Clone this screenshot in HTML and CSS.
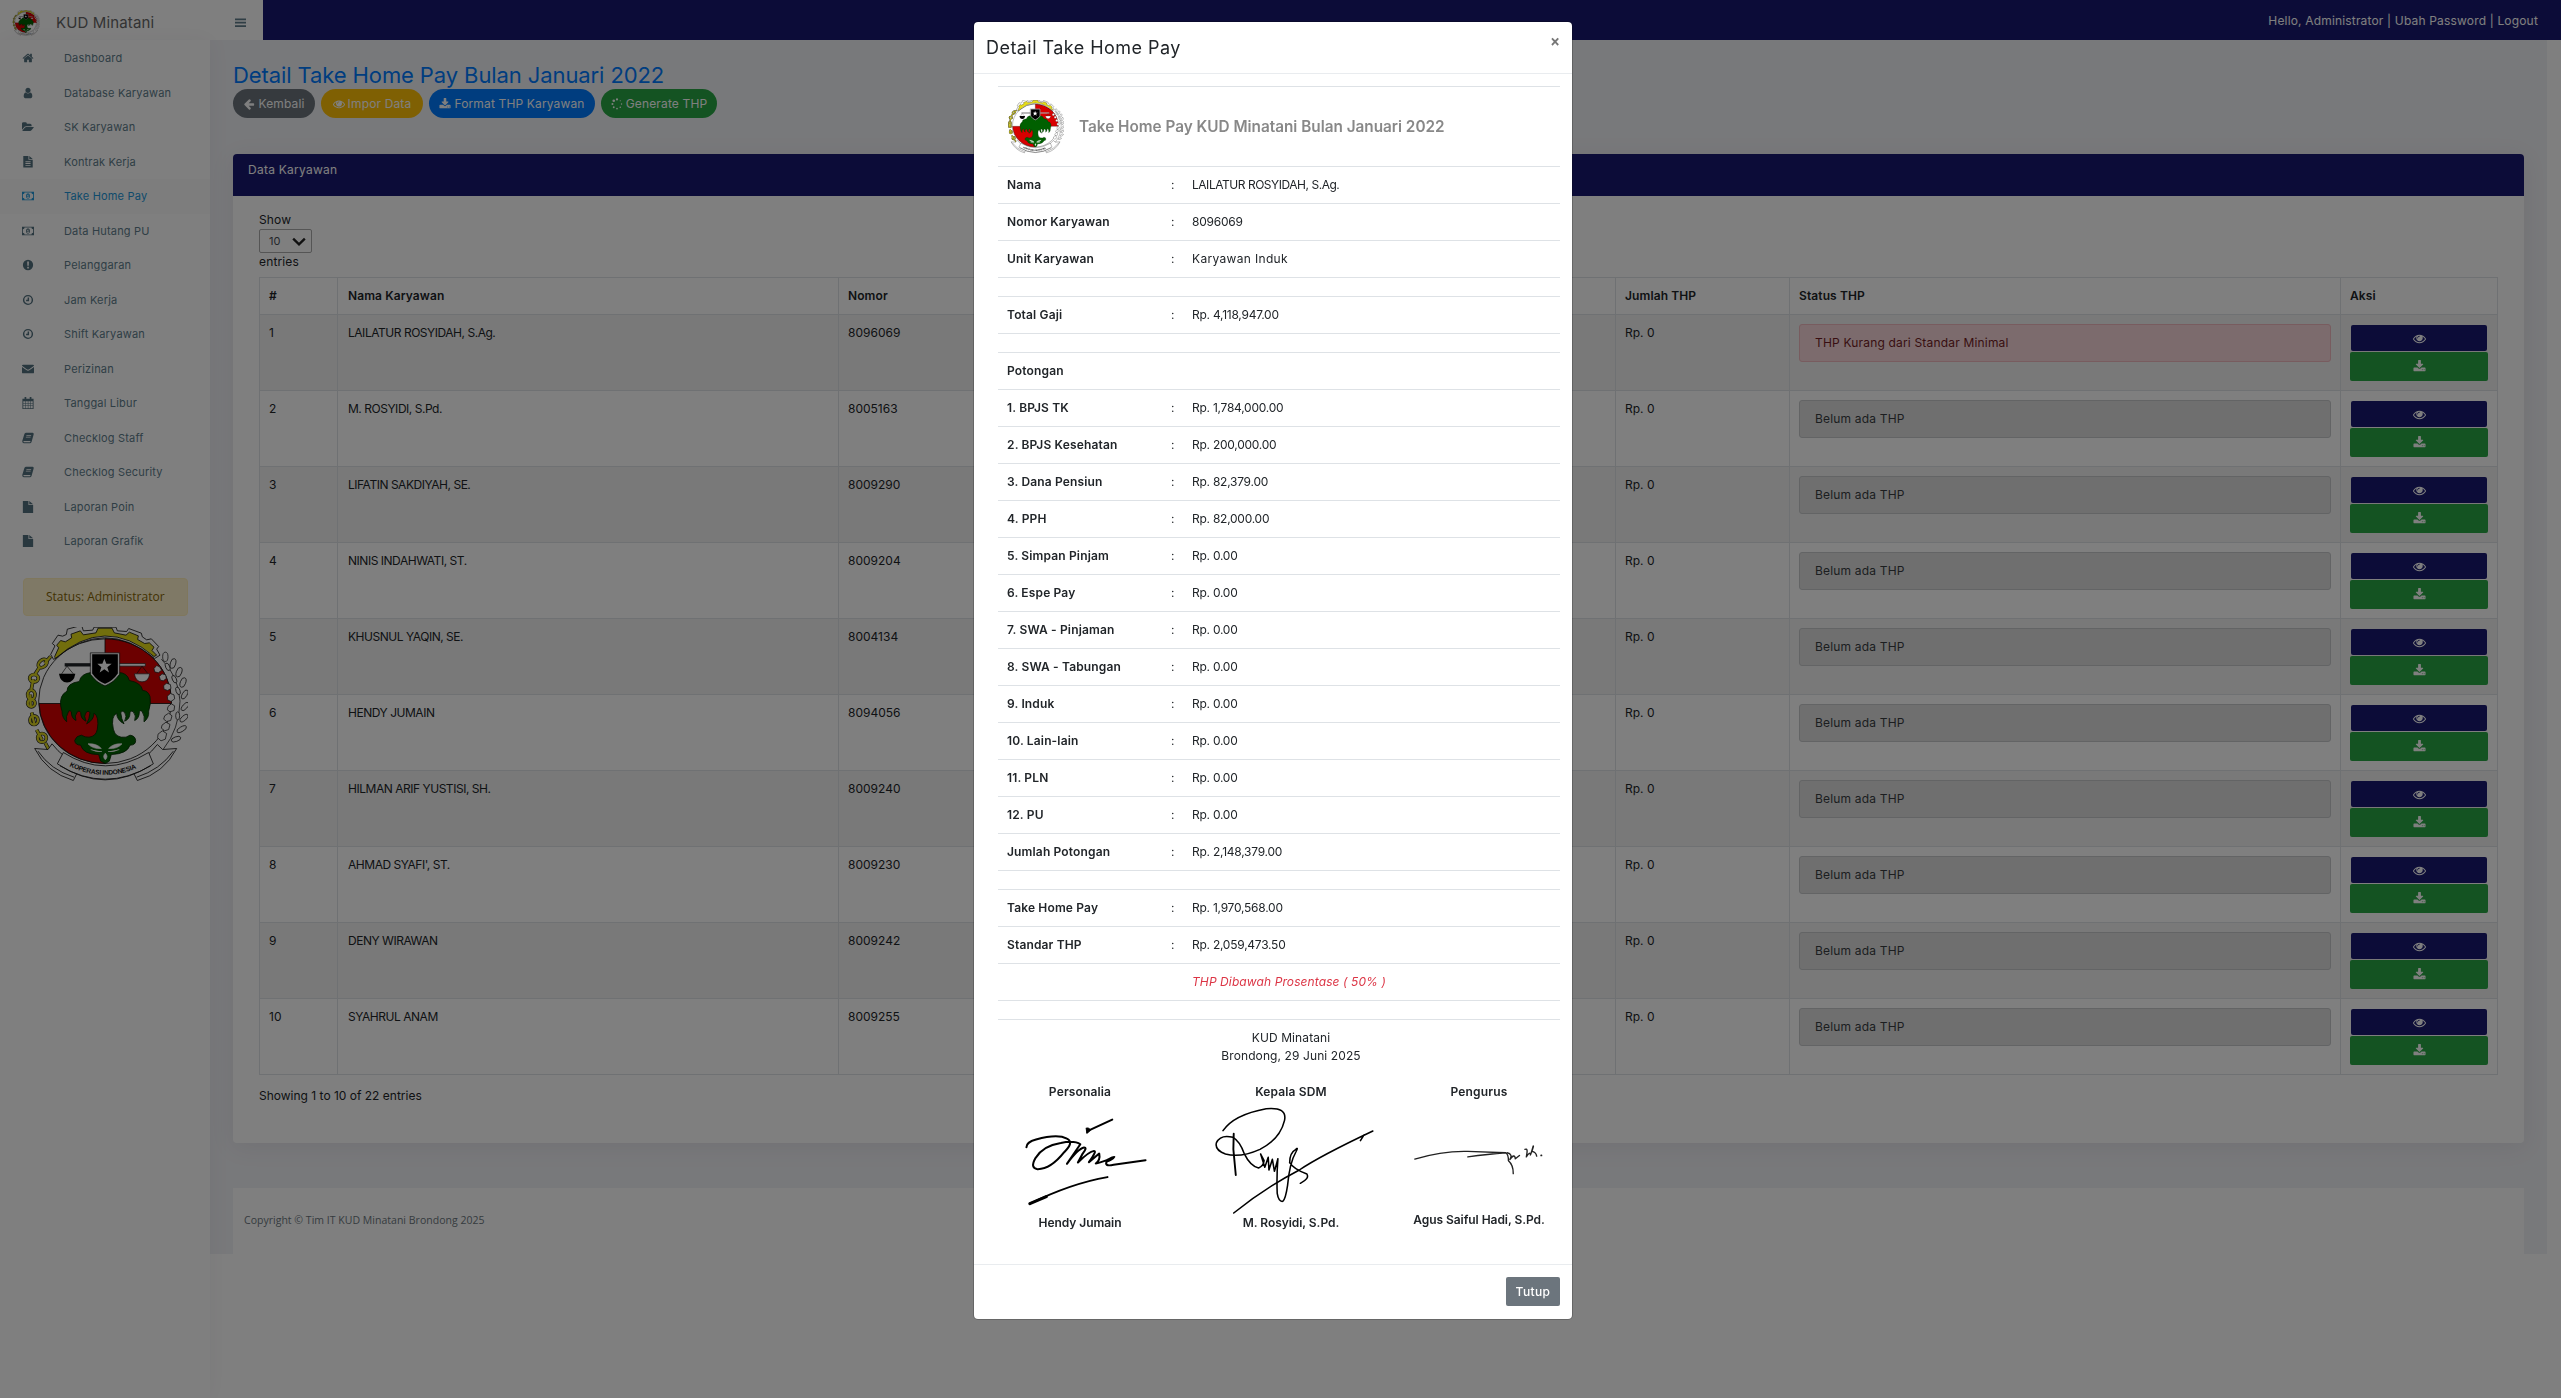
FILE: index.html
```html
<!DOCTYPE html>
<html lang="id">
<head>
<meta charset="utf-8">
<title>KUD Minatani</title>
<link rel="stylesheet" href="styles.css">
</head>
<body>
<svg class="defs" width="0" height="0">
  <symbol id="i-home" viewBox="0 0 1792 1792"><path d="M1472 992v480q0 26-19 45t-45 19h-384v-384h-256v384h-384q-26 0-45-19t-19-45v-480q0-1 .5-3t.5-3l575-474 575 474q1 2 1 6zm223-69l-62 74q-8 9-21 11h-3q-13 0-21-7l-692-577-692 577q-12 8-24 7-13-2-21-11l-62-74q-8-10-7-23.5t11-21.5l719-599q32-26 76-26t76 26l244 204v-195q0-14 9-23t23-9h192q14 0 23 9t9 23v408l219 182q10 8 11 21.5t-7 23.5z"/></symbol>
  <symbol id="i-user" viewBox="0 0 1792 1792"><path d="M1536 1399q0 109-62.5 187t-150.5 78h-854q-88 0-150.5-78t-62.5-187q0-85 8.5-160.5t31.5-152 58.5-131 94-89 134.5-34.5q131 128 313 128t313-128q76 0 134.5 34.5t94 89 58.5 131 31.5 152 8.5 160.5zm-256-887q0 159-112.500 271.500t-271.500 112.500-271.500-112.500-112.500-271.500 112.500-271.500 271.500-112.500 271.500 112.500 112.500 271.500z"/></symbol>
  <symbol id="i-folder" viewBox="0 0 1920 1792"><path d="M1879 952q0 31-31 66l-336 396q-43 51-120.500 86.500t-143.500 35.500h-1088q-34 0-60.500-13t-26.500-43q0-31 31-66l336-396q43-51 120.500-86.500t143.500-35.500h1088q34 0 60.500 13t26.500 43zm-343-344v160h-832q-94 0-197 47.500t-164 119.500l-337 396-5 6q0-4-.5-12.500t-.5-12.500v-960q0-92 66-158t158-66h320q92 0 158 66t66 158v32h544q92 0 158 66t66 158z"/></symbol>
  <symbol id="i-doc" viewBox="0 0 14 14"><path fill-rule="evenodd" d="M1.500 0H7.500V4.500H12.500V13.500H1.500ZM8.500 0L12.500 3.600H8.500ZM4 6.200V7.200H10V6.200ZM4 8.300V9.300H10V8.300ZM4 10.400V11.400H10V10.400Z"/></symbol>
  <symbol id="i-money" viewBox="0 0 14 14"><path fill-rule="evenodd" d="M0 2H14V12H0ZM1 5V9A2 2 0 0 1 3 11H11A2 2 0 0 1 13 9V5A2 2 0 0 1 11 3H3A2 2 0 0 1 1 5Z"/><path fill-rule="evenodd" d="M7 3.800A2.300 3.200 0 0 1 7 10.200A2.300 3.200 0 0 1 7 3.800ZM6 6V6.700H6.600V8.300H5.900V9H8.200V8.300H7.500V5.200H6.900Z"/></symbol>
  <symbol id="i-alert" viewBox="0 0 14 14"><path fill-rule="evenodd" d="M7 1A6 6 0 0 1 7 13A6 6 0 0 1 7 1ZM6 3L6.200 8H7.900L8.100 3ZM6.100 9V11H8V9Z"/></symbol>
  <symbol id="i-clock" viewBox="0 0 14 14"><path fill="none" stroke="currentColor" stroke-width="1.700" d="M7 1.900A5.100 5.100 0 0 1 7 12.100A5.100 5.100 0 0 1 7 1.900ZM7.400 4V7.500H4.800"/></symbol>
  <symbol id="i-mail" viewBox="0 0 14 14"><path d="M0 3.200Q0 2 1.200 2H12.800Q14 2 14 3.200L8.500 7.400Q7 8.500 5.500 7.400ZM0 4.600L5 8.300Q7 9.700 9 8.300L14 4.600V11Q14 12 12.800 12H1.200Q0 12 0 11Z"/></symbol>
  <symbol id="i-cal" viewBox="0 0 14 14"><path fill-rule="evenodd" d="M.5 2H3V0H5V2H9V0H11V2H13.500V14H.5ZM1.500 5V7.200H4V5ZM4.600 5V7.200H6.800V5ZM7.400 5V7.200H9.600V5ZM10.200 5V7.200H12.500V5ZM1.500 7.800V10H4V7.800ZM4.600 7.800V10H6.800V7.800ZM7.400 7.800V10H9.600V7.800ZM10.200 7.800V10H12.500V7.800ZM1.500 10.600V13H4V10.600ZM4.600 10.600V13H6.800V10.600ZM7.400 10.600V13H9.600V10.600ZM10.200 10.600V13H12.500V10.600Z"/></symbol>
  <symbol id="i-book" viewBox="0 0 14 14"><path fill-rule="evenodd" d="M4.500 1H12.500Q14 1.300 13.600 2.800L11.200 11.500Q10.900 12.800 9.500 13H2Q0 12.600 .3 10.500L2.600 3Q3.100 1.200 4.500 1ZM5.300 3.500L5 4.300H10.500L10.800 3.500ZM4.700 5.600L4.400 6.400H9.900L10.200 5.600ZM1.800 10.500Q1.400 11.900 2.400 12H9.400L10 10.500Z"/></symbol>
  <symbol id="i-file" viewBox="0 0 14 14"><path d="M1 0H7.500V4.700H13V14H1ZM8.500 0L13 3.800H8.500Z"/></symbol>
  <symbol id="i-bars" viewBox="0 0 12 12"><path d="M0 1.500H12V3.500H0ZM0 5.200H12V7.200H0ZM0 8.900H12V10.900H0Z"/></symbol>
  <symbol id="i-left" viewBox="0 0 1792 1792"><path d="M1664 896v128q0 53-32.500 90.500t-84.500 37.500h-704l293 294q38 36 38 90t-38 90l-75 76q-37 37-90 37-52 0-91-37l-651-652q-37-37-37-90 0-52 37-91l651-650q38-38 91-38 52 0 90 38l75 74q38 38 38 91t-38 91l-293 293h704q52 0 84.500 37.500t32.500 90.500z"/></symbol>
  <symbol id="i-eye" viewBox="0 0 1792 1792"><path d="M1664 960q-152-236-381-353 61 104 61 225 0 185-131.500 316.500t-316.500 131.500-316.500-131.500-131.500-316.500q0-121 61-225-229 117-381 353 133 205 333.500 326.500t434.500 121.500 434.500-121.500 333.500-326.500zm-720-384q0-20-14-34t-34-14q-125 0-214.500 89.500t-89.500 214.500q0 20 14 34t34 14 34-14 14-34q0-86 61-147t147-61q20 0 34-14t14-34zm848 384q0 34-20 69-140 230-376.500 368.500t-499.500 138.500-499.500-139-376.500-368q-20-35-20-69t20-69q140-229 376.500-368t499.500-139 499.500 139 376.500 368q20 35 20 69z"/></symbol>
  <symbol id="i-down" viewBox="0 0 1792 1792"><path d="M1344 1344q0-26-19-45t-45-19-45 19-19 45 19 45 45 19 45-19 19-45zm256 0q0-26-19-45t-45-19-45 19-19 45 19 45 45 19 45-19 19-45zm128-224v320q0 40-28 68t-68 28h-1472q-40 0-68-28t-28-68v-320q0-40 28-68t68-28h465l135 136q58 56 136 56t136-56l136-136h464q40 0 68 28t28 68zm-325-569q17 41-14 70l-448 448q-18 19-45 19t-45-19l-448-448q-31-29-14-70 17-39 59-39h256v-448q0-26 19-45t45-19h256q26 0 45 19t19 45v448h256q42 0 59 39z"/></symbol>
  <symbol id="i-spin" viewBox="0 0 14 14"><circle cx="7" cy="1.700" r="1.300"/><circle cx="3.200" cy="3.200" r="1.500"/><circle cx="1.700" cy="7" r="1.200"/><circle cx="3.200" cy="10.800" r="1.100"/><circle cx="7" cy="12.300" r="1"/><circle cx="10.800" cy="10.800" r=".9"/><circle cx="12.300" cy="7" r=".8"/><circle cx="10.800" cy="3.200" r=".7"/></symbol>

  <symbol id="logo" viewBox="9 24 495 470">
    <g stroke="#111" stroke-width="2.500" stroke-linejoin="round">
      <ellipse cx="255" cy="246" rx="199" ry="187" fill="#fff"/>
      <path d="M255 59A199 187 0 0 1 454 253H255Z" fill="#d80000"/>
      <path d="M255 433A199 187 0 0 1 57 253H255Z" fill="#d80000"/>
      <path d="M92 106L105 80L97 73L114 48L128 51L139 46L142 30L172 22H186L190 35L218 33L222 24H288L292 35L320 37L326 28L364 42L367 53L380 62L394 59L416 82L410 90L420 108L404 118Q255 -8 101 121Z" fill="#fff"/>
      <path d="M104 112L116 86L110 78L122 64L136 68L155 56L153 45L181 35L190 47L228 41L234 27H276L283 41L318 48L328 39L355 50L353 61L374 73L388 71L402 84L396 94L410 108L402 112Q255 -14 106 118Z" fill="#e5dc1a"/>
    </g>
    <g fill="none" stroke="#222" stroke-width="11">
      <path d="M92 112L74 132M60 142L46 164M40 180L34 210M31 226L32 262M35 280L44 318M50 332L66 362M76 372L88 394"/>
      <ellipse cx="68" cy="133" rx="15" ry="10" transform="rotate(-40 68 133)"/><ellipse cx="42" cy="177" rx="13" ry="11"/><ellipse cx="34" cy="227" rx="11" ry="14"/><ellipse cx="34" cy="252" rx="11" ry="11"/><ellipse cx="42" cy="303" rx="12" ry="13"/><ellipse cx="66" cy="356" rx="13" ry="13"/>
    </g>
    <g fill="none" stroke="#ddd522" stroke-width="7">
      <path d="M92 112L74 132M60 142L46 164M40 180L34 210M31 226L32 262M35 280L44 318M50 332L66 362M76 372L88 394"/>
      <ellipse cx="68" cy="133" rx="15" ry="10" transform="rotate(-40 68 133)"/><ellipse cx="42" cy="177" rx="13" ry="11"/><ellipse cx="34" cy="227" rx="11" ry="14"/><ellipse cx="34" cy="252" rx="11" ry="11"/><ellipse cx="42" cy="303" rx="12" ry="13"/><ellipse cx="66" cy="356" rx="13" ry="13"/>
    </g>
    <g fill="#fff" stroke="#222" stroke-width="2.300">
      <path d="M424 120Q476 170 480 246Q478 330 430 390" fill="none"/>
      <ellipse cx="436" cy="113" rx="8" ry="14"/><ellipse cx="459" cy="133" rx="8" ry="15" transform="rotate(15 459 133)"/><ellipse cx="477" cy="159" rx="8" ry="15" transform="rotate(20 477 159)"/><ellipse cx="489" cy="190" rx="8" ry="15" transform="rotate(20 489 190)"/><ellipse cx="494" cy="226" rx="7" ry="15" transform="rotate(30 494 226)"/><ellipse cx="495" cy="262" rx="7" ry="15" transform="rotate(40 495 262)"/><ellipse cx="492" cy="297" rx="7" ry="15" transform="rotate(50 492 297)"/><ellipse cx="485" cy="330" rx="7" ry="16" transform="rotate(60 485 330)"/><ellipse cx="468" cy="360" rx="7" ry="15" transform="rotate(70 468 360)"/>
      <ellipse cx="443" cy="143" rx="6" ry="12" transform="rotate(-25 443 143)"/><ellipse cx="463" cy="180" rx="6" ry="12" transform="rotate(-25 463 180)"/><ellipse cx="474" cy="215" rx="6" ry="12" transform="rotate(-20 474 215)"/><ellipse cx="473" cy="290" rx="6" ry="12"/>
      <path d="M402 148l8-9 9 4 6 10-10 8-11-3ZM418 172l8-8 11 3 2 11-9 7-9-2ZM431 200l8-8 12 4 2 12-10 6-11-4ZM442 231l9-8 11 4 2 12-11 8-10-5ZM444 262l10-8 10 6-2 14-12 4-8-6ZM434 290l12-8 10 8-4 14-12 3-9-7ZM426 318l12-9 12 7-4 15-12 4-10-8ZM414 345l13-10 13 8-4 17-13 5-10-9Z"/>
    </g>
    <path d="M134 132H216V142H134Z"/><path d="M296 133H376V141H296Z" fill="#fff" stroke="#222" stroke-width="2"/>
    <path d="M141 141L125 164M141 141L160 164" stroke="#111" stroke-width="2"/><path d="M117 164H166Q162 190 141 190Q121 190 117 164Z" fill="#000"/>
    <path d="M366 141L350 164M366 141L384 164" stroke="#111" stroke-width="2"/><path d="M343 164H389Q386 188 366 188Q347 188 343 164Z" fill="#fff" stroke="#222" stroke-width="2"/>
    <path d="M213 160Q182 164 178 187Q141 192 141 216Q118 228 122 260L126 276Q126 296 140 308Q136 292 146 276Q150 272 154 278Q154 298 168 304Q162 290 172 278Q178 272 182 280Q182 300 198 306Q190 290 198 280Q204 272 210 280Q208 300 200 314Q222 302 222 282Q238 292 232 330Q228 352 207 354Q196 355 184 348Q168 350 164 364Q166 378 182 378Q190 406 236 406L242 426L256 433L268 426L274 406Q322 404 330 378Q347 378 347 364Q346 350 330 348L318 354Q286 358 280 330Q272 292 290 282Q290 302 312 314Q304 300 302 280Q308 272 314 280Q322 290 314 306Q330 300 330 280Q334 272 340 278Q350 290 344 304Q358 298 358 278Q362 272 366 276Q376 292 372 308Q388 296 386 276Q394 252 390 232Q384 214 368 214Q364 190 328 184Q322 160 294 160Q255 138 213 160Z" fill="#006000" stroke="#002800" stroke-width="2.500"/>
    <path d="M204 374Q230 372 244 388Q218 390 204 374ZM306 374Q280 372 266 388Q292 390 306 374ZM212 391Q232 400 246 397M298 391Q278 400 264 397M256 402Q246 412 256 422Q266 412 256 402Z" fill="#fff" stroke="#fff" stroke-width="2"/>
    <path d="M214 103H296V164Q280 188 255 197Q230 188 214 164Z" fill="#000" stroke="#fff" stroke-width="5"/><path d="M211 101H299V166Q280 192 255 201Q230 192 211 166Z" fill="none" stroke="#111" stroke-width="2"/>
    <path d="M253 119L259 134H275L262 144L267 160L253 150L239 160L244 144L232 134H247Z" fill="#fff"/>
    <g fill="#fff" stroke="#111" stroke-width="2.500">
      <path d="M44 388L84 391L96 374Q130 418 182 440L160 484Q80 460 44 388Z"/><path d="M470 388L428 391L412 376Q380 418 330 440L352 484Q432 462 470 388Z"/>
      <path d="M54 396Q92 452 162 474M460 396Q420 452 350 474" fill="none"/>
      <path d="M130 400Q255 480 386 400L400 434Q255 530 112 434Z"/><path d="M120 440Q255 520 392 440" fill="none"/>
    </g>
    <path id="lg-arc" d="M148 441Q255 493 364 441" fill="none"/>
    <text class="logo-text"><textPath href="#lg-arc" textLength="208">KOPERASI INDONESIA</textPath></text>
  </symbol>
</svg>

<header class="topbar">
  <div class="brand"><svg class="brand-logo"><use href="#logo"/></svg><span>KUD Minatani</span><svg class="burger"><use href="#i-bars"/></svg></div>
  <nav class="account">Hello, Administrator | Ubah Password | Logout</nav>
</header>

<div class="shell">
  <aside class="sidebar">
    <nav class="menu" id="menu"></nav>
    <div class="role">Status: Administrator</div>
    <svg class="side-logo"><use href="#logo"/></svg>
  </aside>
  <main class="main">
    <h1>Detail Take Home Pay Bulan Januari 2022</h1>
    <div class="actions">
      <a class="pill grey"><svg><use href="#i-left"/></svg>Kembali</a>
      <a class="pill yellow"><svg><use href="#i-eye"/></svg>Impor Data</a>
      <a class="pill blue"><svg><use href="#i-down"/></svg>Format THP Karyawan</a>
      <a class="pill green"><svg><use href="#i-spin"/></svg>Generate THP</a>
    </div>
    <section class="card">
      <div class="card-head">Data Karyawan</div>
      <div class="card-body">
        <div class="len"><span>Show</span><div class="select">10<svg viewBox="0 0 12 9"><path d="M1 2L6 7L11 2" fill="none" stroke="#222" stroke-width="2"/></svg></div><span>entries</span></div>
        <table class="grid">
          <colgroup><col class="c1"><col class="c2"><col class="c3"><col class="c4"><col class="c5"><col class="c6"></colgroup>
          <thead><tr><th>#</th><th>Nama Karyawan</th><th>Nomor</th><th>Jumlah THP</th><th>Status THP</th><th>Aksi</th></tr></thead>
          <tbody id="rows"></tbody>
        </table>
        <div class="info">Showing 1 to 10 of 22 entries</div>
      </div>
    </section>
    <footer class="foot">Copyright © Tim IT KUD Minatani Brondong 2025</footer>
  </main>
</div>

<div class="backdrop">
  <div class="modal">
    <div class="modal-head"><h2>Detail Take Home Pay</h2><span class="close">×</span></div>
    <div class="modal-body">
      <div class="slip-head"><svg class="slip-logo"><use href="#logo"/></svg><strong>Take Home Pay KUD Minatani Bulan Januari 2022</strong></div>
      <div id="slip"></div>
      <div class="sign">
        <p>KUD Minatani<br>Brondong, 29 Juni 2025</p>
        <div class="sign-cols">
          <div class="sg"><b>Personalia</b>
            <div class="ink"><svg width="127" height="93" viewBox="40 40 370 280" preserveAspectRatio="none"><g fill="none" stroke="#000" stroke-width="6" stroke-linecap="round" stroke-linejoin="round"><path d="M50 137Q50 122 78 114Q140 96 168 111Q190 122 160 152Q120 204 82 203Q60 200 76 170Q98 132 150 124Q190 116 207 128L168 187Q200 142 218 138Q228 138 214 156L200 183Q232 150 247 148Q256 148 232 182L262 156Q266 176 252 186Q262 184 284 176Q304 164 306 166Q300 176 284 180Q276 196 304 190L397 176"/><path d="M229 88L300 54"/><path d="M224 80Q232 76 236 86L226 95Z" fill="#000" stroke-width="3"/><path d="M60 307Q180 246 286 227"/><path d="M60 307L108 286" stroke-width="9"/></g></svg></div><b>Hendy Jumain</b></div>
          <div class="sg"><b>Kepala SDM</b>
            <div class="ink"><svg width="164" height="110" viewBox="590 20 475 330" preserveAspectRatio="none"><g fill="none" stroke="#000" stroke-width="4.500" stroke-linecap="round" stroke-linejoin="round"><path d="M619 94Q650 46 744 28Q806 22 797 64Q784 120 726 150Q670 176 626 164Q594 152 600 130Q612 104 648 114Q668 126 680 162Q698 200 722 206Q736 200 738 184L728 164L740 204L750 174L752 212L762 180L768 216L778 178Q774 230 776 282Q780 308 792 306Q800 300 806 258Q812 190 830 158Q838 142 830 150Q812 160 812 190Q824 210 862 224Q870 238 843 252"/><path d="M650 103L649 150L656 227" stroke-width="5.500"/><path d="M650 341Q740 266 840 212Q900 170 1053 95M1028 106L1017 124"/></g></svg></div><b>M. Rosyidi, S.Pd.</b></div>
          <div class="sg"><b>Pengurus</b>
            <div class="ink"><svg width="136" height="37" viewBox="1165 125 395 110" preserveAspectRatio="none"><g fill="none" stroke="#222" stroke-width="4" stroke-linecap="round" stroke-linejoin="round"><path d="M1176 179Q1256 154 1330 156L1440 160Q1448 164 1448 184Q1462 196 1462 222M1330 172Q1390 164 1440 160"/><path d="M1444 160Q1462 164 1452 180Q1466 160 1468 178L1480 168M1496 150Q1506 144 1500 172Q1510 156 1512 164Q1510 176 1520 140Q1522 138 1516 156Q1528 158 1530 170"/><path d="M1543 168h1" stroke-width="5"/></g></svg></div><b>Agus Saiful Hadi, S.Pd.</b></div>
        </div>
      </div>
    </div>
    <div class="modal-foot"><button>Tutup</button></div>
  </div>
</div>
<script src="app.js"></script>
</body>
</html>
```
FILE: app.js
```js
const menu = [["home","Dashboard"],["user","Database Karyawan"],["folder","SK Karyawan"],["doc","Kontrak Kerja"],["money","Take Home Pay"],["money","Data Hutang PU"],["alert","Pelanggaran"],["clock","Jam Kerja"],["clock","Shift Karyawan"],["mail","Perizinan"],["cal","Tanggal Libur"],["book","Checklog Staff"],["book","Checklog Security"],["file","Laporan Poin"],["file","Laporan Grafik"]];
document.getElementById("menu").innerHTML = menu.map(([i, t], n) =>
  `<a class="${n === 4 ? "active" : ""}"><svg><use href="#i-${i}"/></svg>${t}</a>`).join("");

const staff = [["LAILATUR ROSYIDAH, S.Ag.","8096069"],["M. ROSYIDI, S.Pd.","8005163"],["LIFATIN SAKDIYAH, SE.","8009290"],["NINIS INDAHWATI, ST.","8009204"],["KHUSNUL YAQIN, SE.","8004134"],["HENDY JUMAIN","8094056"],["HILMAN ARIF YUSTISI, SH.","8009240"],["AHMAD SYAFI', ST.","8009230"],["DENY WIRAWAN","8009242"],["SYAHRUL ANAM","8009255"]];
document.getElementById("rows").innerHTML = staff.map(([name, no], n) =>
  `<tr><td>${n + 1}</td><td class="caps">${name}</td><td>${no}</td><td>Rp. 0</td>
  <td>${n ? '<div class="note">Belum ada THP</div>' : '<div class="note danger">THP Kurang dari Standar Minimal</div>'}</td>
  <td><div class="btns"><a class="view"><svg><use href="#i-eye"/></svg></a><a class="save"><svg><use href="#i-down"/></svg></a></div></td></tr>`).join("");

const slip = [["Nama","LAILATUR ROSYIDAH, S.Ag.","caps"],["Nomor Karyawan","8096069"],["Unit Karyawan","Karyawan Induk","wide"],0,
["Total Gaji","Rp. 4,118,947.00"],0,["Potongan"],
["1. BPJS TK","Rp. 1,784,000.00"],["2. BPJS Kesehatan","Rp. 200,000.00"],["3. Dana Pensiun","Rp. 82,379.00"],["4. PPH","Rp. 82,000.00"],["5. Simpan Pinjam","Rp. 0.00"],["6. Espe Pay","Rp. 0.00"],["7. SWA - Pinjaman","Rp. 0.00"],["8. SWA - Tabungan","Rp. 0.00"],["9. Induk","Rp. 0.00"],["10. Lain-lain","Rp. 0.00"],["11. PLN","Rp. 0.00"],["12. PU","Rp. 0.00"],["Jumlah Potongan","Rp. 2,148,379.00"],0,
["Take Home Pay","Rp. 1,970,568.00"],["Standar THP","Rp. 2,059,473.50"],["","THP Dibawah Prosentase ( 50% )","warn"],0];
document.getElementById("slip").innerHTML = slip.map(r => r
  ? `<div class="line"><b>${r[0]}</b><i>${r[0] && r[1] ? ":" : ""}</i><span class="${r[2] || "num"}">${r[1] || ""}</span></div>`
  : '<div class="line gap"></div>').join("");
```
FILE: styles.css
```css
*{box-sizing:border-box}
html,body{height:100%}
body{margin:0;overflow:hidden;background:#fff;font:12px/18px Inter,"Open Sans",sans-serif;color:#212529}
svg{fill:currentColor;flex:none}
.defs{position:absolute}
.logo-text{font:bold 20px "Liberation Sans",sans-serif;fill:#111}

.topbar{display:flex;justify-content:space-between;height:40px;background:#191970}
.brand{display:flex;align-items:center;width:263px;height:41px;padding:4px 17px 0 12px;background:#fff;font-size:15px;letter-spacing:.13px;color:#666}
.brand-logo{width:28px;height:26px;margin-right:16px}
.burger{width:11px;height:13px;margin-left:auto;color:#607d8b}
.account{padding:12px 23px 0 0;color:#fff;letter-spacing:.17px}

.shell{display:flex;height:1358px}
.sidebar{width:210px;padding-top:1px;background:#fff;box-shadow:0 0 20px rgba(60,50,90,.06);z-index:1}
.menu a{display:flex;align-items:center;height:34.5px;padding:0 0 0 22px;color:#607d8b;font-size:11px;letter-spacing:.18px}
.menu svg{width:12px;height:12px;margin-right:30px;color:#52707e}
.menu .active{background:#fafafa;color:#2196d8}
.menu .active svg{color:#2196d8}
.role{width:165px;height:38px;margin:19px 0 0 23px;padding:9px 22px;border:1px solid #ffeeba;border-radius:4px;background:#fff3cd;color:#856404;font-family:"Open Sans",sans-serif;white-space:nowrap}
.side-logo{display:block;width:165px;height:157px;margin:11px 0 0 23px}

.main{width:2337px;height:1214px;padding:20px 23px 0;background:#f1f2f6}
h1{height:29px;margin:0;padding-top:1px;font-size:22px;line-height:29px;font-weight:400;letter-spacing:-.1px;color:#007bff}
.actions{display:flex;height:65px;align-items:flex-start}
.pill{display:flex;align-items:center;justify-content:center;height:29px;border-radius:15px;color:#fff;letter-spacing:.15px;gap:3px;margin-right:6px;white-space:nowrap}
.pill svg{width:12px;height:12px}
.grey{width:82px;background:#6c757d}
.yellow{width:102px;background:#ffc107}
.blue{width:166px;background:#007bff}
.green{width:116px;background:#28a745}
.card{height:989px;border-radius:4px;background:#fff;box-shadow:0 4px 25px rgba(60,40,80,.08)}
.card-head{height:42px;padding:7px 15px;border-radius:4px 4px 0 0;background:#191970;color:#fff;letter-spacing:.25px}
.card-body{padding:15px 26px}
.len{height:66px;display:flex;flex-direction:column;letter-spacing:.15px}
.select{display:flex;align-items:center;justify-content:space-between;width:53px;height:24px;padding:0 5px 0 9px;border:1px solid #aaa;border-radius:2px;font-size:11px;color:#495057}
.select svg{width:14px;height:11px}
.len span{height:18px}
.grid{width:2238px;table-layout:fixed;border-collapse:collapse}
.c1{width:78px}.c2{width:501px}.c3{width:777px}.c4{width:174px}.c5{width:551px}.c6{width:157px}
.grid th,.grid td{border:1px solid #dee2e6;padding:9px;text-align:left;vertical-align:top}
.grid th{height:37px;font-weight:600;letter-spacing:.1px}
.grid td{height:76px}
.grid th:nth-child(2),.grid td:nth-child(2){padding-left:10px}
.grid tr:nth-child(odd) td{background:#f2f2f2}
.grid thead tr th{background:#fff}
.caps{letter-spacing:-.47px}
.note{height:38px;padding:9px 15px;border:1px solid #c6c8ca;border-radius:3px;background:#dfdfdf;color:#383d41;letter-spacing:.18px}
.danger{background:#f8d7da;border-color:#f1b8be;color:#721c24}
.btns{display:flex;flex-direction:column;align-items:center;gap:1px}
.btns a{display:flex;align-items:center;justify-content:center;color:#fff;border-radius:2px}
.btns svg{width:13px;height:13px}
.view{width:136px;height:26px;margin-top:1px;background:#191970}
.save{width:138px;height:29px;background:#28a745}
.info{padding-top:12px}
.foot{height:66px;margin-top:45px;padding:23px 11px;background:#fff;font:10.5px/18px "Open Sans",sans-serif;letter-spacing:.02px;color:#6c7780}

.backdrop{position:fixed;inset:0;z-index:5;padding:21px 0 0 973px;background:rgba(0,0,0,.5)}
.modal{display:flex;flex-direction:column;width:600px;height:1299px;border:1px solid rgba(0,0,0,.2);border-radius:5px;background:#fff;background-clip:padding-box}
.modal-head{display:flex;justify-content:space-between;height:52px;padding:11px 12px 0 12px;border-bottom:1px solid #e9ecef}
h2{margin:0;font-size:18px;line-height:29px;font-weight:400;letter-spacing:.45px}
.close{font:bold 17px/18px "Open Sans",sans-serif;color:#777}
.modal-body{flex:1;padding:12px 12px 0 24px}
.slip-head{display:flex;align-items:center;height:80px;border-top:1px solid #dee2e6;padding-left:9px;gap:15px;font-size:15.3px;color:#888}
.slip-head strong{font-weight:600}
.slip-logo{width:57px;height:54px}
.line{display:flex;height:37px;padding:9px 0 0 9px;border-top:1px solid #dee2e6;white-space:nowrap}
.line.gap{height:19px}
.line b,.sg b{font-weight:600;letter-spacing:.15px}
.line b{width:164px}
.line i{width:21px;font-style:normal}
.num{letter-spacing:-.25px}
.wide{letter-spacing:.33px}
.warn{font-style:italic;color:#dc3545;letter-spacing:.1px}
.sign{padding-top:9px;border-top:1px solid #dee2e6}
.sign p{width:586px;margin:0;text-align:center;letter-spacing:.1px}
.sign-cols{display:flex;padding-top:18px}
.sg{display:flex;flex-direction:column;align-items:center;width:164px;white-space:nowrap}
.sg:nth-child(2){width:258px}
.sg:nth-child(3){width:118px}
.sg .ink + b{letter-spacing:-.05px}
.ink{display:flex;align-items:center;height:113px;padding:7px 0 0 13px}
.sg:nth-child(2) .ink{padding-left:8px}
.sg:nth-child(3) .ink{height:110px;padding:7px 0 0}
.modal-foot{display:flex;justify-content:flex-end;height:55px;padding:12px 12px 0;border-top:1px solid #e9ecef}
.modal-foot button{width:54px;height:29px;border:0;border-radius:2px;background:#6c757d;color:#fff;font:500 12px/18px Inter,sans-serif;letter-spacing:.4px}
```
